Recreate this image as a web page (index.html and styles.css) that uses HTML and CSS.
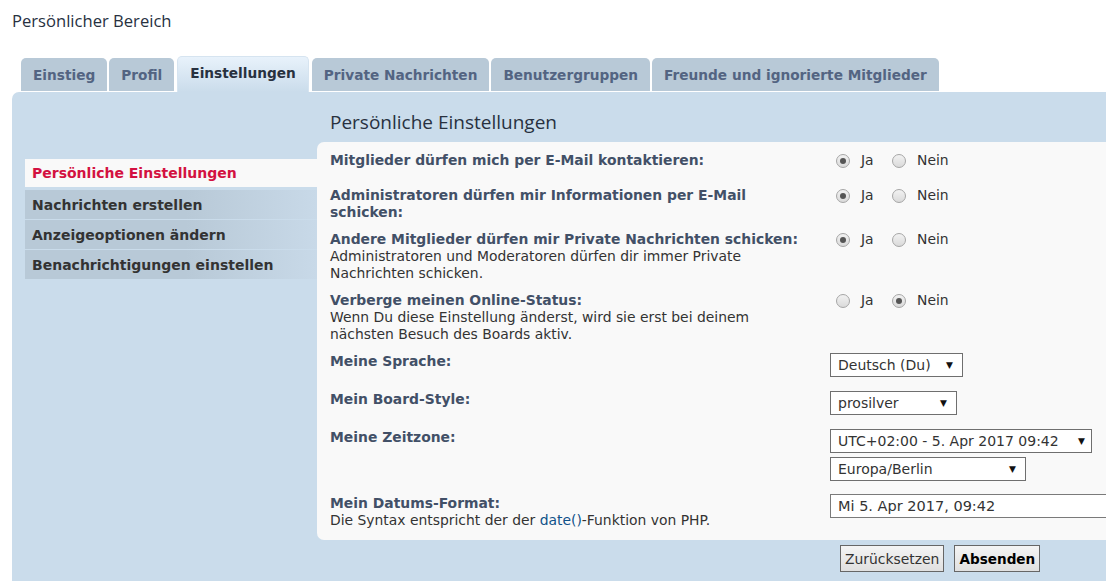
FILE: index.html
```html
<!DOCTYPE html>
<html lang="de">
<head>
    <meta charset="UTF-8">
    <title>Persönlicher Bereich</title>
    <link rel="stylesheet" href="styles.css">
</head>
<body>
<div class="page">
    <h2 class="page-title">Persönlicher Bereich</h2>

    <!-- Reiter -->
    <ul class="tabs">
        <li class="tab">Einstieg</li>
        <li class="tab">Profil</li>
        <li class="tab active">Einstellungen</li>
        <li class="tab">Private Nachrichten</li>
        <li class="tab">Benutzergruppen</li>
        <li class="tab">Freunde und ignorierte Mitglieder</li>
    </ul>

    <div class="panel">
        <!-- linkes Menü -->
        <ul class="side-menu">
            <li class="active">Persönliche Einstellungen</li>
            <li>Nachrichten erstellen</li>
            <li>Anzeigeoptionen ändern</li>
            <li>Benachrichtigungen einstellen</li>
        </ul>

        <div class="main">
            <h3 class="main-title">Persönliche Einstellungen</h3>

            <div class="inner">
                <div class="row">
                    <div class="label"><b>Mitglieder dürfen mich per E-Mail kontaktieren:</b></div>
                    <div class="field">
                        <label class="opt"><input type="radio" name="r1" checked> Ja</label>
                        <label class="opt"><input type="radio" name="r1"> Nein</label>
                    </div>
                </div>
                <div class="row">
                    <div class="label"><b>Administratoren dürfen mir Informationen per E-Mail schicken:</b></div>
                    <div class="field">
                        <label class="opt"><input type="radio" name="r2" checked> Ja</label>
                        <label class="opt"><input type="radio" name="r2"> Nein</label>
                    </div>
                </div>
                <div class="row">
                    <div class="label"><b>Andere Mitglieder dürfen mir Private Nachrichten schicken:</b><br>Administratoren und Moderatoren dürfen dir immer Private Nachrichten schicken.</div>
                    <div class="field">
                        <label class="opt"><input type="radio" name="r3" checked> Ja</label>
                        <label class="opt"><input type="radio" name="r3"> Nein</label>
                    </div>
                </div>
                <div class="row">
                    <div class="label"><b>Verberge meinen Online-Status:</b><br>Wenn Du diese Einstellung änderst, wird sie erst bei deinem nächsten Besuch des Boards aktiv.</div>
                    <div class="field">
                        <label class="opt"><input type="radio" name="r4"> Ja</label>
                        <label class="opt"><input type="radio" name="r4" checked> Nein</label>
                    </div>
                </div>
                <div class="row">
                    <div class="label"><b>Meine Sprache:</b></div>
                    <div class="field">
                        <div class="select w-lang"><span>Deutsch (Du)</span><span class="arrow">▼</span></div>
                    </div>
                </div>
                <div class="row">
                    <div class="label"><b>Mein Board-Style:</b></div>
                    <div class="field">
                        <div class="select w-style"><span>prosilver</span><span class="arrow">▼</span></div>
                    </div>
                </div>
                <div class="row">
                    <div class="label"><b>Meine Zeitzone:</b></div>
                    <div class="field">
                        <div class="select w-utc"><span>UTC+02:00 - 5. Apr 2017 09:42</span><span class="arrow">▼</span></div>
                        <div class="select w-tz"><span>Europa/Berlin</span><span class="arrow">▼</span></div>
                    </div>
                </div>
                <div class="row">
                    <div class="label"><b>Mein Datums-Format:</b><br>Die Syntax entspricht der der <a href="#">date()</a>-Funktion von PHP.</div>
                    <div class="field">
                        <input class="text-input" type="text" value="Mi 5. Apr 2017, 09:42">
                    </div>
                </div>
            </div>

            <div class="submit-row">
                <button class="btn">Zurücksetzen</button>
                <button class="btn bold">Absenden</button>
            </div>
        </div>
    </div>
</div>
</body>
</html>
```

FILE: styles.css
```css
body {
    margin: 0;
    padding: 0;
    background: #fff;
    color: #333;
    font-family: "DejaVu Sans", Verdana, sans-serif;
    font-size: 13.9px;
    overflow: hidden;
}

.page {
    width: 1140px;
    padding: 10px 0 0 12px;
}

/* Überschrift */
.page-title {
    margin: 0;
    font-family: "Open Sans", "DejaVu Sans", sans-serif;
    font-weight: normal;
    font-size: 16.6px;
    line-height: 21px;
    color: #28313f;
}

/* Reiter */
.tabs {
    list-style: none;
    margin: 25px 0 0 9px;
    padding: 0;
    height: 36px;
    display: flex;
    align-items: flex-end;
    gap: 2px;
}
.tab {
    height: 33px;
    line-height: 35px;
    margin-bottom: 1px;
    padding: 0 12px;
    background: #b8c9d7;
    color: #536482;
    font-weight: bold;
    font-size: 13.7px;
    border-radius: 5px 5px 0 0;
}
.tab.active {
    height: 35px;
    line-height: 33px;
    margin: 0 1px;
    background: linear-gradient(#e8f2fb, #cadceb);
    color: #28313f;
    border: 1px solid #d6e4f0;
    border-bottom: 0;
}

/* Hauptbereich */
.panel {
    background: #cadceb;
    border-radius: 7px 0 0 0;
    padding: 19px 0 9px 13px;
    display: flex;
}

.side-menu {
    list-style: none;
    margin: 48px 0 0 0;
    padding: 0;
    width: 292px;
    flex-shrink: 0;
}
.side-menu li {
    height: 29px;
    line-height: 30px;
    margin-bottom: 1px;
    padding-left: 7px;
    font-weight: bold;
    font-size: 14px;
    color: #333;
    background: linear-gradient(to right, #b8c9d7 55%, #c8d9e8);
}
.side-menu li.active {
    height: 28px;
    line-height: 29px;
    margin-bottom: 3px;
    background: #f9f9f9;
    color: #d31141;
}

.main {
    flex: 1;
}
.main-title {
    margin: 0 0 9px 0;
    padding-left: 13px;
    font-family: "Open Sans", "DejaVu Sans", sans-serif;
    font-weight: normal;
    font-size: 19px;
    line-height: 22px;
    color: #28313f;
}

.inner {
    background: #f9f9f9;
    border-radius: 7px 0 0 7px;
    padding: 5px 13px 6px;
}

.row {
    display: flex;
    padding: 5px 0;
    min-height: 25px;
    line-height: 17px;
}
.label {
    width: 478px;
    margin-right: 22px;
    flex-shrink: 0;
}
.label b {
    color: #425067;
}
.label a {
    color: #105289;
    text-decoration: none;
}
.field {
    flex: 1;
}

/* Radio-Buttons */
.opt {
    display: inline-flex;
    align-items: center;
    margin-right: 14px;
}
.opt:first-child {
    margin-left: 6px;
}
.opt input {
    appearance: none;
    -webkit-appearance: none;
    width: 14px;
    height: 14px;
    margin: 0 11px 0 0;
    border: 1px solid #a6a6a6;
    border-radius: 50%;
    background: linear-gradient(#f2f2f2, #dadada);
    position: relative;
}
.opt input:checked::after {
    content: "";
    position: absolute;
    left: 3px;
    top: 3px;
    width: 6px;
    height: 6px;
    border-radius: 50%;
    background: #555;
}

/* Auswahlfelder */
.select {
    display: flex;
    justify-content: space-between;
    align-items: center;
    box-sizing: border-box;
    height: 24px;
    margin-bottom: 4px;
    padding: 0 9px 0 7px;
    border: 1px solid #6f6f6f;
    background: #fff;
    color: #333;
    font-size: 14px;
}
.select .arrow {
    font-size: 9px;
    color: #111;
}
.w-lang { width: 133px; }
.w-style { width: 127px; }
.w-utc { width: 262px; padding-right: 6px; }
.w-tz { width: 196px; }

.text-input {
    display: block;
    box-sizing: border-box;
    width: 320px;
    height: 24px;
    margin: -1px 0 0 0;
    padding: 0 7px;
    border: 1px solid #7a7a7a;
    background: #fff;
    font-family: inherit;
    font-size: 14.5px;
    color: #333;
}

/* Buttons */
.submit-row {
    display: flex;
    gap: 10px;
    margin-top: 5px;
    padding-left: 523px;
}
.btn {
    height: 27px;
    padding: 0 4px;
    border: 1px solid #666;
    background: linear-gradient(#f4f4f4, #e0e0e0);
    font-family: "DejaVu Sans", Verdana, sans-serif;
    font-size: 13.9px;
    color: #333;
}
.btn.bold {
    font-weight: bold;
    font-size: 13.6px;
    color: #000;
    padding: 0 4px;
}
```
